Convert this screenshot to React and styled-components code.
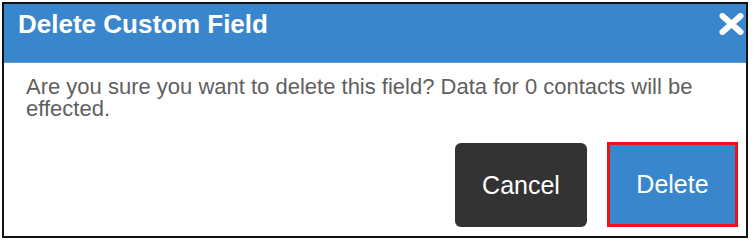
import React from 'react'
import styled, { createGlobalStyle } from 'styled-components'

const GlobalStyle = createGlobalStyle`
    html, body {
        margin: 0;
        padding: 0;
        background: #ffffff;
    }
    body {
        font-family: "Liberation Sans", Arial, sans-serif;
    }
`

const color = {
    blue: '#3a86cc',
    dark: '#333333',
    text: '#5f5f5f',
    red: '#e8141c',
}

const Dialog = styled.div`
    margin: 2px;
    width: 746px;
    height: 236px;
    box-sizing: border-box;
    border: 2px solid #111111;
    background: #ffffff;
    display: flex;
    flex-direction: column;
`

const Header = styled.div`
    height: 59px;
    box-sizing: border-box;
    background: ${color.blue};
    border-bottom: 1px solid #5b9ad4;
    display: flex;
    align-items: flex-start;
    justify-content: space-between;
    padding: 5px 2px 0 14px;
`

const Title = styled.h2`
    margin: 0;
    font-size: 26px;
    line-height: 30px;
    font-weight: 700;
    color: #ffffff;
`

const CloseButton = styled.button`
    margin-top: 4px;
    padding: 0;
    border: none;
    background: transparent;
    width: 25px;
    height: 22px;
    display: flex;
    cursor: pointer;
`

const Body = styled.p`
    margin: 0;
    padding: 13px 22px 0 22px;
    font-size: 22px;
    line-height: 22px;
    color: ${color.text};
`

const Footer = styled.div`
    margin-top: auto;
    display: flex;
    justify-content: flex-end;
    align-items: flex-end;
    gap: 20px;
    padding: 0 8px 9px 0;
`

const Button = styled.button`
    box-sizing: border-box;
    width: ${p => (p.$primary ? '131px' : '132px')};
    height: ${p => (p.$primary ? '85px' : '84px')};
    border: ${p => (p.$primary ? `3px solid ${color.red}` : 'none')};
    border-radius: ${p => (p.$primary ? '0' : '6px')};
    background: ${p => (p.$primary ? color.blue : color.dark)};
    color: #ffffff;
    font-family: "Liberation Sans", Arial, sans-serif;
    font-size: 25px;
    padding: 0;
    cursor: pointer;
`

const CloseIcon = () => (
    <svg width="25" height="22" viewBox="0 0 25 22">
        <g stroke="#ffffff" strokeWidth="6" strokeLinecap="round">
            <line x1="3.5" y1="3" x2="21.5" y2="19" />
            <line x1="21.5" y1="3" x2="3.5" y2="19" />
        </g>
    </svg>
)

export default function App() {
    return (
        <>
            <GlobalStyle />
            <Dialog>
                <Header>
                    <Title>Delete Custom Field</Title>
                    <CloseButton aria-label="Close">
                        <CloseIcon />
                    </CloseButton>
                </Header>
                <Body>
                    Are you sure you want to delete this field? Data for 0 contacts will be effected.
                </Body>
                <Footer>
                    <Button>Cancel</Button>
                    <Button $primary>Delete</Button>
                </Footer>
            </Dialog>
        </>
    )
}
